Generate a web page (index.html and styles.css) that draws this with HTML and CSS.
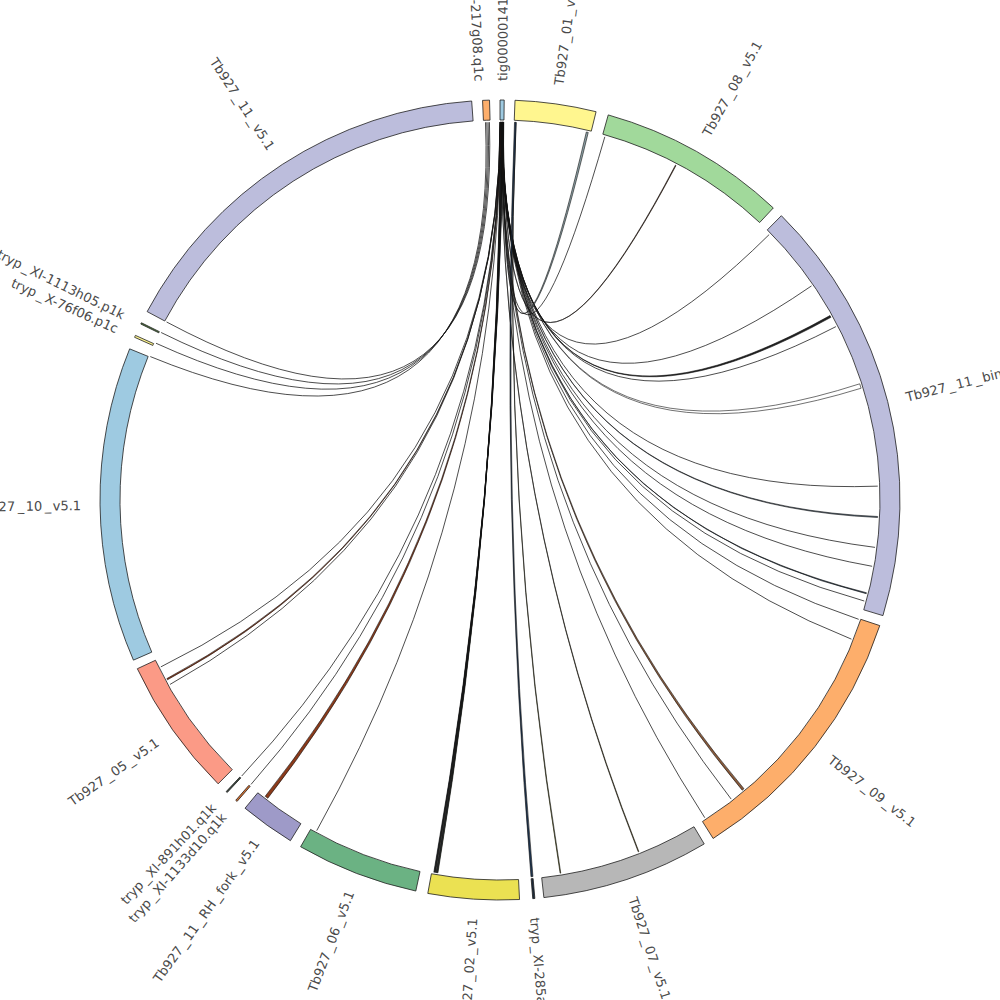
FILE: index.html
```html
<!DOCTYPE html>
<html lang="en">
<head>
<meta charset="utf-8">
<title>Circos plot</title>
<link rel="stylesheet" href="styles.css">
</head>
<body>
<main class="page">
  <svg id="chart" class="chart" xmlns="http://www.w3.org/2000/svg" width="1000" height="1000" viewBox="0 0 1000 1000">
    <g id="links" class="links"></g>
    <g id="ideo" class="ideo"></g>
    <g id="labels" class="labels"></g>
  </svg>
</main>
<script src="script.js"></script>
</body>
</html>
```

FILE: styles.css
```css
html, body {
  margin: 0;
  padding: 0;
  background: #ffffff;
}
.page {
  width: 1000px;
  height: 1000px;
  overflow: hidden;
}
.chart {
  display: block;
}
.seg {
  stroke: #1e1e1e;
  stroke-width: 0.8;
  stroke-linejoin: miter;
}
.link {
  stroke: #111111;
  stroke-width: 0.75;
  fill: none;
}
.ribbon {
  stroke: #111111;
  stroke-width: 0.6;
}
.lbl {
  font-family: "DejaVu Sans", "Liberation Sans", sans-serif;
  font-size: 13px;
  fill: #4a4a4a;
}
```

FILE: script.js
```javascript
(function () {
  var NS = 'http://www.w3.org/2000/svg';
  var CX = 500, CY = 500, RO = 400, RI = 380, RL = 378, RT = 419;

  function pt(a, r) {
    var t = a * Math.PI / 180;
    return [CX + r * Math.sin(t), CY - r * Math.cos(t)];
  }
  function f(p) { return p[0].toFixed(2) + ',' + p[1].toFixed(2); }

  function el(name, attrs, parent) {
    var e = document.createElementNS(NS, name);
    for (var k in attrs) e.setAttribute(k, attrs[k]);
    parent.appendChild(e);
    return e;
  }

  var segments = [
    ['Tb927_11_v5.1', -61.9, -4.06, '#bcbddc'],
    ['tryp-217g08.q1c', -2.5, -1.5, '#fdae6b'],
    ['tig00000141', 0, 0.6, '#9ecae1'],
    ['Tb927_01_v5.1', 2.15, 13.9, '#fff68f'],
    ['Tb927_08_v5.1', 15.7, 43.1, '#a1d99b'],
    ['Tb927_11_bin_v5.1', 44.7, 106.8, '#bcbddc'],
    ['Tb927_09_v5.1', 108.3, 147.8, '#fdae6b'],
    ['Tb927_07_v5.1', 149.3, 173.7, '#b7b7b7'],
    ['tryp_XI-285a03.q1k', 175.0, 175.3, '#1c2a3a'],
    ['Tb927_02_v5.1', 177.2, 190.4, '#ebe152'],
    ['Tb927_06_v5.1', 192.15, 209.9, '#6bb283'],
    ['Tb927_11_RH_fork_v5.1', 211.6, 219.6, '#9e9ac8'],
    ['tryp_XI-1133d10.q1k', 221.1, 221.35, '#d9702e'],
    ['tryp_XI-891h01.q1k', 223.0, 223.2, '#3c4a40'],
    ['Tb927_05_v5.1', 224.8, 245.05, '#fb9a86'],
    ['Tb927_10_v5.1', 246.4, 292.2, '#9ecae1'],
    ['tryp_X-76f06.p1c', 294.0, 294.3, '#fff68f'],
    ['tryp_XI-1113h05.p1k', 296.1, 296.3, '#4f7a3c']
  ];

  var labelAngles = {
    'Tb927_11_v5.1': -33,
    'tryp-217g08.q1c': -2.8,
    'tig00000141': 0.3,
    'Tb927_01_v5.1': 8.0,
    'Tb927_08_v5.1': 29.4,
    'Tb927_11_bin_v5.1': 75.75,
    'Tb927_09_v5.1': 128,
    'Tb927_07_v5.1': 161.5,
    'tryp_XI-285a03.q1k': 175.2,
    'Tb927_02_v5.1': -176.2,
    'Tb927_06_v5.1': -159,
    'Tb927_11_RH_fork_v5.1': -144.4,
    'tryp_XI-1133d10.q1k': -138.7,
    'tryp_XI-891h01.q1k': -136.8,
    'Tb927_05_v5.1': -125.1,
    'Tb927_10_v5.1': -90.7,
    'tryp_X-76f06.p1c': -65.9,
    'tryp_XI-1113h05.p1k': -63.8
  };

  // links: [a1s, a1e, a2s, a2e, fill]  (fill null => single line)
  var links = [
    // 02 bundle
    [0.05, 0.13, 189.45, 189.55, '#2a3820'],
    [0.18, 0.26, 189.65, 189.75, '#1d2f45'],
    [0.3, 0.4, 189.82, 189.92, '#33331f'],
    [0.44, 0.5, 190.0, 190.08, '#243446'],
    [0.1, 0.1, 189.6, 189.6, null],
    [0.35, 0.35, 189.95, 189.95, null],
    // right side, Tb927_11_bin
    [0.45, 0.45, 45.4, 45.4, null],
    [0.42, 0.42, 55.5, 55.5, null],
    [0.38, 0.44, 60.8, 61.1, '#222222'],
    [0.36, 0.36, 62.7, 62.7, null],
    [0.33, 0.35, 72.1, 72.8, '#ffffff'],
    [0.3, 0.3, 87.9, 87.9, null],
    [0.28, 0.29, 92.5, 92.65, '#5c7184'],
    [0.26, 0.26, 97.2, 97.2, null],
    [0.25, 0.25, 100.1, 100.1, null],
    [0.23, 0.24, 104.2, 104.35, '#44586a'],
    [0.22, 0.22, 105.5, 105.5, null],
    [0.2, 0.2, 108.4, 108.4, null],
    [0.19, 0.19, 111.6, 111.6, null],
    // 09 lower part
    [0.15, 0.18, 139.8, 140.15, '#8a5a3a'],
    [0.14, 0.14, 142.3, 142.3, null],
    [0.13, 0.13, 147.2, 147.2, null],
    // 07
    [0.12, 0.125, 158.45, 158.55, '#7a6a2a'],
    [2.4, 2.42, 170.75, 170.85, '#8a8a30'],
    [2.2, 2.45, 175.0, 175.3, '#1f3550'],
    // from 01 / 08 back to the top
    [0.5, 0.55, 13.2, 13.5, '#8fa3a8'],
    [0.52, 0.52, 16.1, 16.1, null],
    [0.54, 0.55, 27.65, 27.75, '#6b3a1e'],
    // left bottom from tig
    [0.08, 0.08, 209.0, 209.0, null],
    [0.06, 0.1, 217.9, 218.4, '#8b3a1a'],
    [0.04, 0.04, 221.2, 221.2, null],
    [0.02, 0.02, 223.1, 223.1, null],
    [0.03, 0.03, 243.8, 243.8, null],
    [0.05, 0.07, 241.6, 241.8, '#8b3a1a'],
    [0.01, 0.01, 240.8, 240.8, null],
    // left top from 217g08
    [-1.6, -1.6, 298.1, 298.1, null],
    [-1.8, -1.8, 296.3, 296.3, null],
    [-2.0, -2.0, 294.5, 294.5, null],
    [-2.2, -2.2, 292.3, 292.3, null]
  ];

  var gLinks = document.getElementById('links');
  var gIdeo = document.getElementById('ideo');
  var gLab = document.getElementById('labels');
  var c = CX + ',' + CY;

  links.forEach(function (l) {
    var d;
    if (l[4] === null) {
      d = 'M' + f(pt(l[0], RL)) + ' Q' + c + ' ' + f(pt(l[2], RL));
      el('path', { d: d, 'class': 'link' }, gLinks);
    } else {
      d = 'M' + f(pt(l[0], RL)) + ' Q' + c + ' ' + f(pt(l[3], RL)) +
          ' L' + f(pt(l[2], RL)) + ' Q' + c + ' ' + f(pt(l[1], RL)) + ' Z';
      el('path', { d: d, 'class': 'ribbon', fill: l[4] }, gLinks);
    }
  });

  function fillLabel(t, text) {
    // underscores are drawn with a little extra room around them, as in the plot
    var parts = text.split('_');
    parts.forEach(function (part, i) {
      if (i > 0) {
        var u = document.createElementNS(NS, 'tspan');
        u.setAttribute('dx', '2.5');
        u.textContent = '_';
        t.appendChild(u);
      }
      var s = document.createElementNS(NS, 'tspan');
      if (i > 0) s.setAttribute('dx', '1.5');
      s.textContent = part;
      t.appendChild(s);
    });
  }

  segments.forEach(function (s) {
    var a1 = s[1], a2 = s[2];
    var p1 = pt(a1, RO), p2 = pt(a2, RO), p3 = pt(a2, RI), p4 = pt(a1, RI);
    var large = (a2 - a1) > 180 ? 1 : 0;
    var d = 'M' + f(p1) + ' A' + RO + ',' + RO + ' 0 ' + large + ' 1 ' + f(p2) +
            ' L' + f(p3) + ' A' + RI + ',' + RI + ' 0 ' + large + ' 0 ' + f(p4) + ' Z';
    el('path', { d: d, 'class': 'seg', fill: s[3] }, gIdeo);

    var a = labelAngles[s[0]];
    var p = pt(a, RT);
    var rot, anchor;
    if (a >= 0 && a <= 180) { rot = a - 90; anchor = 'start'; }
    else { rot = a + 90; anchor = 'end'; }
    var t = el('text', {
      'class': 'lbl',
      transform: 'translate(' + p[0].toFixed(2) + ',' + p[1].toFixed(2) + ') rotate(' + rot.toFixed(2) + ')',
      'text-anchor': anchor,
      'dominant-baseline': 'central'
    }, gLab);
    fillLabel(t, s[0]);
  });
})();
```
